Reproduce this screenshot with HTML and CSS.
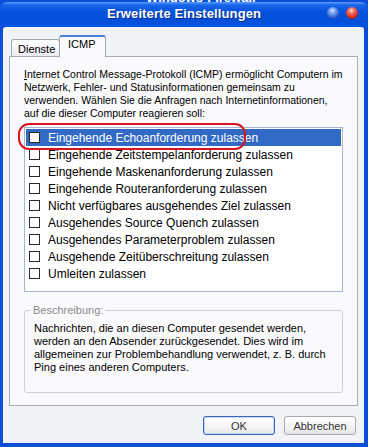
FILE: index.html
```html
<!DOCTYPE html>
<html lang="de">
<head>
<meta charset="utf-8">
<link rel="stylesheet" href="styles.css">
</head>
<body>
<div class="window">
  <div class="behind">Windows-Firewall</div>
  <div class="titlebar">
    <span class="title">Erweiterte Einstellungen</span>
    <div class="tbtns"><span class="ball blue"></span><span class="ball red"></span></div>
  </div>
  <div class="client">
    <div class="tabs">
      <div class="tab">Dienste</div>
      <div class="tab active">ICMP</div>
    </div>
    <div class="panel">
      <p class="intro"><u>I</u>nternet Control Message-Protokoll (ICMP) ermöglicht Computern im<br>Netzwerk, Fehler- und Statusinformationen gemeinsam zu<br>verwenden. Wählen Sie die Anfragen nach Internetinformationen,<br>auf die dieser Computer reagieren soll:</p>
      <div class="listbox">
        <div class="row sel"><span class="cb"></span><span class="lbl">Eingehende Echoanforderung zulassen</span></div>
        <div class="row"><span class="cb"></span><span class="lbl">Eingehende Zeitstempelanforderung zulassen</span></div>
        <div class="row"><span class="cb"></span><span class="lbl">Eingehende Maskenanforderung zulassen</span></div>
        <div class="row"><span class="cb"></span><span class="lbl">Eingehende Routeranforderung zulassen</span></div>
        <div class="row"><span class="cb"></span><span class="lbl">Nicht verfügbares ausgehendes Ziel zulassen</span></div>
        <div class="row"><span class="cb"></span><span class="lbl">Ausgehendes Source Quench zulassen</span></div>
        <div class="row"><span class="cb"></span><span class="lbl">Ausgehendes Parameterproblem zulassen</span></div>
        <div class="row"><span class="cb"></span><span class="lbl">Ausgehende Zeitüberschreitung zulassen</span></div>
        <div class="row"><span class="cb"></span><span class="lbl">Umleiten zulassen</span></div>
      </div>
      <fieldset class="group">
        <legend>Beschreibung:</legend>
        <p>Nachrichten, die an diesen Computer gesendet werden,<br>werden an den Absender zurückgesendet. Dies wird im<br>allgemeinen zur Problembehandlung verwendet, z. B. durch<br>Ping eines anderen Computers.</p>
      </fieldset>
    </div>
    <div class="buttons">
      <button class="btn default">OK</button>
      <button class="btn">Abbrechen</button>
    </div>
  </div>
  <div class="annot"></div>
</div>
</body>
</html>
```
FILE: styles.css
```css
* { box-sizing: border-box; }
html, body { margin: 0; padding: 0; }
body {
  width: 368px;
  height: 447px;
  overflow: hidden;
  background: #1f63e0;
  font-family: "Liberation Sans", Arial, sans-serif;
  font-size: 11px;
  color: #000;
}
.window {
  position: relative;
  width: 368px;
  height: 447px;
  display: flex;
  flex-direction: column;
  background: #0b4fd8;
}
.behind {
  position: absolute;
  top: -10px;
  left: 146px;
  font: bold 13px "Liberation Sans", Arial, sans-serif;
  color: #fff;
  z-index: 2;
}
.titlebar {
  height: 25px;
  margin-top: 2px;
  border-radius: 7px 7px 0 0;
  background: linear-gradient(#5f9cf8 0%, #1766ea 12%, #0552de 40%, #044fd9 75%, #0856e0 100%);
  display: flex;
  align-items: center;
  justify-content: center;
  position: relative;
  padding-bottom: 2px;
}
.title {
  font: bold 13px "Liberation Sans", Arial, sans-serif;
  color: #fff;
  text-shadow: 1px 1px 0 #0a2a8a;
  letter-spacing: 0.1px;
}
.tbtns {
  position: absolute;
  right: 10px;
  top: 5px;
  display: flex;
  gap: 7px;
}
.ball {
  width: 12px;
  height: 12px;
  border-radius: 50%;
  display: block;
}
.ball.blue { background: radial-gradient(circle at 45% 30%, #d8e8ff 0, #6f9ff0 30%, #2a55c8 70%, #1a3a98 100%); }
.ball.red { background: radial-gradient(circle at 45% 30%, #ffd8d0 0, #f06a5a 30%, #c82418 70%, #8a1208 100%); }
.client {
  flex: 1;
  margin: 0 4px 4px 3px;
  background: #f2f3f7;
  border-radius: 3px 3px 0 0;
  display: flex;
  flex-direction: column;
  padding: 8px 6px 0 6px;
}
.tabs {
  height: 21px;
  display: flex;
  align-items: flex-end;
  padding-left: 2px;
  position: relative;
  z-index: 1;
}
.tab {
  height: 17px;
  width: 49px;
  border: 1px solid #9ea6b0;
  border-bottom: none;
  border-radius: 3px 3px 0 0;
  background: linear-gradient(#ffffff, #ececf0);
  padding: 3px 0 0 6px;
  font-size: 11px;
}
.tab.active {
  height: 22px;
  width: 47px;
  margin-left: -1px;
  margin-bottom: -1px;
  background: #fafafc;
  border-top: 2px solid #4a7fd4;
  padding: 1px 0 0 8px;
}
.panel {
  height: 350px;
  border: 1px solid #a7adb6;
  background: #fafafc;
  padding: 11px 14px 0 14px;
}
.intro {
  margin: 0;
  line-height: 13px;
  font-size: 10.5px;
  white-space: nowrap;
}
.listbox {
  margin-top: 7px;
  height: 165px;
  border: 1px solid #a9b6c9;
  background: #fff;
  padding: 1px 1px 0 1px;
}
.row {
  height: 17px;
  display: flex;
  align-items: center;
  padding-left: 3px;
  font-size: 12px;
}
.row.sel {
  background: #316ac5;
  color: #fff;
}
.cb {
  width: 11px;
  height: 11px;
  border: 1px solid #2a2a2a;
  background: #fff;
  margin-right: 8px;
  flex: none;
}
.group {
  margin: 12px 0 0 0;
  height: 89px;
  border: 1px solid #cfd0d6;
  border-radius: 3px;
  padding: 6px 9px 0 9px;
}
.group legend {
  color: #8a8a8a;
  padding: 0 2px;
  margin-left: -3px;
  font-size: 11px;
}
.group p {
  margin: 0;
  line-height: 13px;
  white-space: nowrap;
}
.buttons {
  display: flex;
  justify-content: flex-end;
  gap: 9px;
  margin-top: 10px;
  padding-right: 2px;
}
.btn {
  width: 72px;
  height: 19px;
  font: 11px "Liberation Sans", Arial, sans-serif;
  color: #333;
  background: linear-gradient(#ffffff, #f2f2f2 70%, #e2e2e6);
  border: 1px solid #a8a8ae;
  border-radius: 3px;
  padding: 0;
}
.btn.default {
  border-color: #3b64bc;
  box-shadow: inset 0 0 0 1px #c6d6f4;
}
.annot {
  position: absolute;
  left: 18px;
  top: 123px;
  width: 228px;
  height: 27px;
  border: 2px solid #d8141e;
  border-radius: 11px;
}
```
